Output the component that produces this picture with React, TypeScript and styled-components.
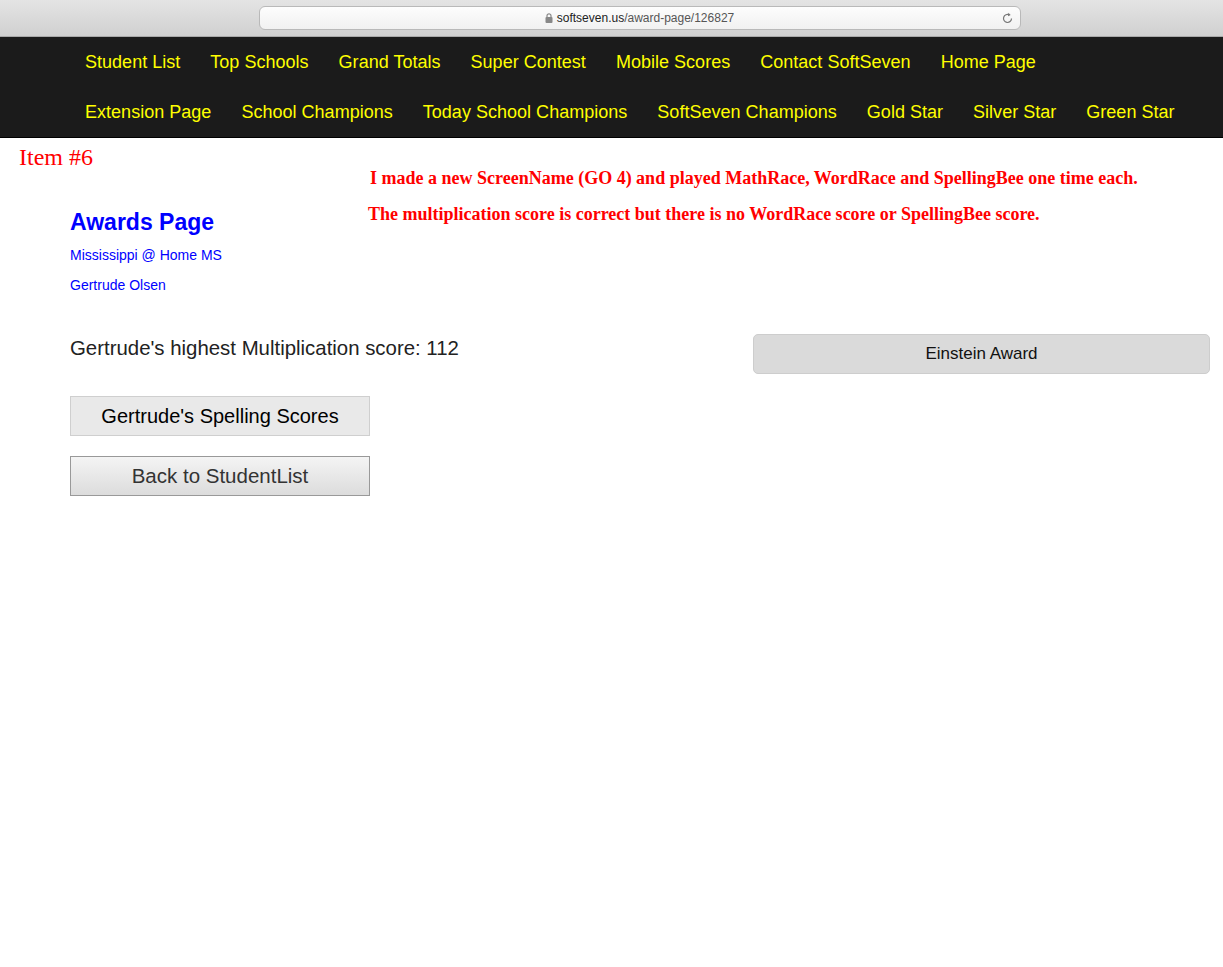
import React from "react";
import styled, { createGlobalStyle } from "styled-components";

const Global = createGlobalStyle`
  html, body { margin: 0; padding: 0; background: #fff; }
  body { font-family: "Liberation Sans", Arial, Helvetica, sans-serif; }
`;

const Page = styled.div`
  width: 1223px;
  min-height: 967px;
  position: relative;
  background: #fff;
`;

const Chrome = styled.div`
  height: 37px;
  box-sizing: border-box;
  background: linear-gradient(#e4e4e4, #d0d0d0);
  border-bottom: 1px solid #a9a9a9;
  display: flex;
  justify-content: center;
  align-items: flex-start;
  padding: 6px 0 0 56px;
`;

const Address = styled.div`
  width: 762px;
  height: 24px;
  box-sizing: border-box;
  border: 1px solid #b9b9b9;
  border-radius: 6px;
  background: linear-gradient(#fdfdfd, #f1f1f1);
  display: flex;
  align-items: center;
  justify-content: center;
  position: relative;
  font-size: 12px;
  color: #555;
  gap: 4px;
`;

const Domain = styled.span`
  color: #222;
`;

const Reload = styled.svg`
  position: absolute;
  right: 6px;
  top: 5px;
`;

const Nav = styled.nav`
  background: #1b1b1b;
  height: 101px;
  box-sizing: border-box;
  border-bottom: 1px solid #000;
  padding: 1px 0 0 70px;
  display: flex;
  flex-direction: column;
`;

const NavRow = styled.div`
  display: flex;
  height: 50px;
  align-items: center;
`;

const NavLink = styled.a`
  color: #ffff00;
  font-size: 18px;
  padding: 0 15px;
  text-decoration: none;
  white-space: nowrap;
  letter-spacing: 0.02px;
`;

const Note = styled.div<{ $x: number; $y: number; $size: number; $bold?: boolean }>`
  position: absolute;
  left: ${(p) => p.$x}px;
  top: ${(p) => p.$y}px;
  font-family: "Liberation Serif", "Times New Roman", serif;
  font-size: ${(p) => p.$size}px;
  font-weight: ${(p) => (p.$bold ? 700 : 400)};
  color: #ff0000;
  white-space: nowrap;
`;

const Content = styled.main`
  padding: 70px 13px 0 70px;
`;

const Title = styled.h1`
  margin: 0;
  color: #0000ff;
  font-size: 23px;
  font-weight: 700;
  line-height: 28px;
`;

const Sub = styled.p<{ $mt: number }>`
  margin: 0;
  color: #0000ff;
  font-size: 14px;
  line-height: 16px;
  margin-top: ${(p) => p.$mt}px;
`;

const Body = styled.div`
  display: grid;
  grid-template-columns: 1fr 457px;
  column-gap: 20px;
  margin-top: 42px;
`;

const LeftCol = styled.div`
  display: flex;
  flex-direction: column;
  align-items: flex-start;
`;

const Score = styled.p`
  margin: 0;
  font-size: 20.4px;
  line-height: 26px;
  color: #222;
`;

const Btn = styled.button<{ $variant: "flat" | "grad" }>`
  width: 300px;
  height: 40px;
  box-sizing: border-box;
  font-family: "Liberation Sans", Arial, sans-serif;
  font-size: ${(p) => (p.$variant === "flat" ? 20 : 20.5)}px;
  color: ${(p) => (p.$variant === "flat" ? "#000" : "#333")};
  border: 1px solid ${(p) => (p.$variant === "flat" ? "#cfcfcf" : "#999")};
  background: ${(p) =>
    p.$variant === "flat" ? "#e9e9e9" : "linear-gradient(#f4f4f4, #dcdcdc)"};
  border-radius: 0;
  padding: 0;
  cursor: pointer;
`;

const SpellBtn = styled(Btn)`
  margin-top: 35px;
`;

const BackBtn = styled(Btn)`
  margin-top: 20px;
`;

const Award = styled.button`
  height: 40px;
  width: 457px;
  margin-top: -1px;
  box-sizing: border-box;
  background: #dadada;
  border: 1px solid #cdcdcd;
  border-radius: 5px;
  font-family: "Liberation Sans", Arial, sans-serif;
  font-size: 17px;
  color: #111;
`;

const row1 = ["Student List", "Top Schools", "Grand Totals", "Super Contest", "Mobile Scores", "Contact SoftSeven", "Home Page"];
const row2 = ["Extension Page", "School Champions", "Today School Champions", "SoftSeven Champions", "Gold Star", "Silver Star", "Green Star"];

export default function App() {
  return (
    <Page>
      <Global />
      <Chrome>
        <Address>
          <svg width="8" height="10" viewBox="0 0 8 10">
            <path d="M2 4V2.8a2 2 0 0 1 4 0V4" stroke="#888" strokeWidth="1.2" fill="none" />
            <rect x="0.5" y="4" width="7" height="6" rx="1" fill="#888" />
          </svg>
          <span>
            <Domain>softseven.us</Domain>/award-page/126827
          </span>
          <Reload width="13" height="13" viewBox="0 0 13 13">
            <path d="M10.5 6.5a4 4 0 1 1-2.2-3.6" stroke="#777" strokeWidth="1.2" fill="none" />
            <path d="M7.3 0.8l2.4 2.1-2.7 1.3z" fill="#777" />
          </Reload>
        </Address>
      </Chrome>
      <Nav>
        <NavRow>
          {row1.map((t) => (
            <NavLink key={t}>{t}</NavLink>
          ))}
        </NavRow>
        <NavRow>
          {row2.map((t) => (
            <NavLink key={t}>{t}</NavLink>
          ))}
        </NavRow>
      </Nav>
      <Note $x={19} $y={144} $size={24}>Item #6</Note>
      <Note $x={370} $y={168} $size={18} $bold>
        I made a new ScreenName (GO 4) and played MathRace, WordRace and SpellingBee one time each.
      </Note>
      <Note $x={368} $y={204} $size={18} $bold>
        The multiplication score is correct but there is no WordRace score or SpellingBee score.
      </Note>
      <Content>
        <Title>Awards Page</Title>
        <Sub $mt={11}>Mississippi @ Home MS</Sub>
        <Sub $mt={14}>Gertrude Olsen</Sub>
        <Body>
          <LeftCol>
            <Score>Gertrude's highest Multiplication score: 112</Score>
            <SpellBtn $variant="flat">Gertrude's Spelling Scores</SpellBtn>
            <BackBtn $variant="grad">Back to StudentList</BackBtn>
          </LeftCol>
          <div>
            <Award>Einstein Award</Award>
          </div>
        </Body>
      </Content>
    </Page>
  );
}
